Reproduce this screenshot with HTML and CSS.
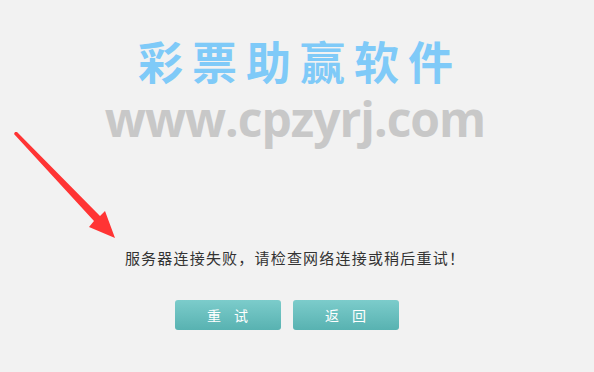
FILE: index.html
```html
<!DOCTYPE html>
<html lang="zh-CN">
<head>
    <meta charset="UTF-8">
    <meta name="viewport" content="width=device-width, initial-scale=1.0">
    <title>服务器连接失败</title>
    <link rel="stylesheet" href="styles.css">
</head>
<body>
    <div class="page">
        <div class="logo">
            <div class="logo-title">彩票助赢软件</div>
            <div class="logo-url">www.cpzyrj.com</div>
        </div>

        <p class="message">服务器连接失败，请检查网络连接或稍后重试！</p>

        <div class="actions">
            <button class="btn" type="button">重 试</button>
            <button class="btn" type="button">返 回</button>
        </div>

        <svg class="arrow" width="120" height="120" viewBox="0 0 120 120">
            <polygon points="15,4 17,4 100,88 105,83 115,110 89,99 94,93 14,6" fill="#ff3434"/>
        </svg>
    </div>
</body>
</html>
```

FILE: styles.css
```css
body {
    margin: 0;
    background-color: #f2f2f2;
    font-family: "Noto Sans CJK SC", "Liberation Sans", sans-serif;
    color: #333333;
}
.page {
    position: relative;
    height: 372px;
    overflow: hidden;
}
.logo {
    padding-top: 35px;
    text-align: center;
}
.logo-title {
    font-size: 45px;
    font-weight: bold;
    line-height: 51px;
    letter-spacing: 9px;
    padding-left: 6px;
    color: #7fcaf8;
}
.logo-url {
    font-family: "Open Sans", "Liberation Sans", sans-serif;
    font-size: 48px;
    font-weight: bold;
    line-height: 66px;
    letter-spacing: -1px;
    padding-right: 4px;
    color: #c8c8c8;
}
.message {
    margin: 96px 0 0;
    padding-right: 4px;
    text-align: center;
    font-size: 15px;
    line-height: 20px;
    letter-spacing: 1.2px;
    text-spacing-trim: space-all;
}
.actions {
    display: flex;
    justify-content: center;
    gap: 12px;
    margin-top: 32px;
    padding-right: 20px;
}
.btn {
    width: 106px;
    height: 30px;
    border: none;
    border-radius: 3px;
    background: linear-gradient(#7ccccb, #58b2b1);
    color: #ffffff;
    font-family: "Noto Sans CJK SC", sans-serif;
    font-size: 14px;
    letter-spacing: 5px;
    padding-left: 10px;
    cursor: pointer;
}
.arrow {
    position: absolute;
    left: 0;
    top: 128px;
}
```
